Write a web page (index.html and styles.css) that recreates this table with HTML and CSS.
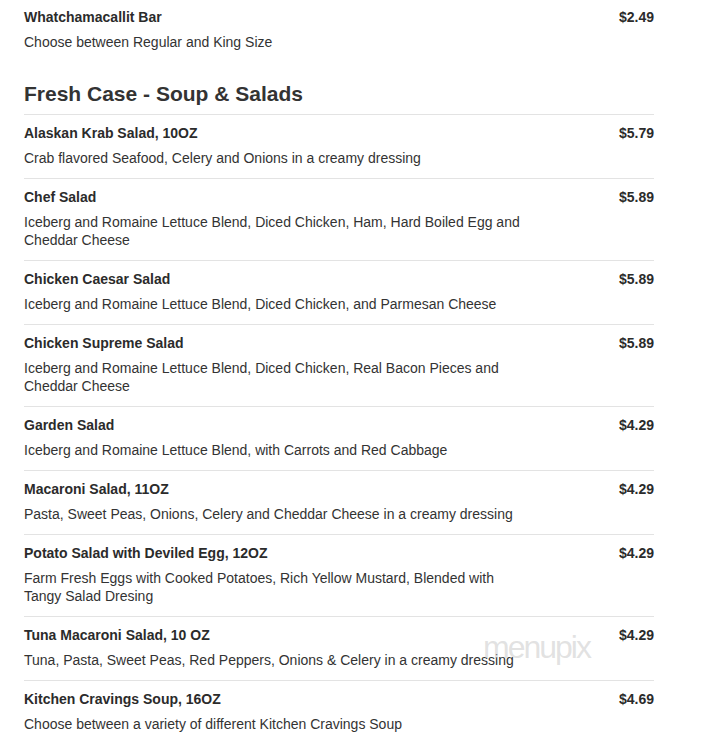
FILE: index.html
```html
<!DOCTYPE html>
<html lang="en">
<head>
<meta charset="utf-8">
<title>Menu</title>
<link rel="stylesheet" href="styles.css">
</head>
<body>
<div class="menu">
  <div class="section">
    <div class="item first">
      <div class="name">Whatchamacallit Bar</div>
      <div class="price">$2.49</div>
      <div class="desc">Choose between Regular and King Size</div>
    </div>
  </div>
  <div class="section">
    <h2 class="heading">Fresh Case - Soup &amp; Salads</h2>
    <div class="item">
      <div class="name">Alaskan Krab Salad, 10OZ</div>
      <div class="price">$5.79</div>
      <div class="desc">Crab flavored Seafood, Celery and Onions in a creamy dressing</div>
    </div>
    <div class="item">
      <div class="name">Chef Salad</div>
      <div class="price">$5.89</div>
      <div class="desc">Iceberg and Romaine Lettuce Blend, Diced Chicken, Ham, Hard Boiled Egg and Cheddar Cheese</div>
    </div>
    <div class="item">
      <div class="name">Chicken Caesar Salad</div>
      <div class="price">$5.89</div>
      <div class="desc">Iceberg and Romaine Lettuce Blend, Diced Chicken, and Parmesan Cheese</div>
    </div>
    <div class="item">
      <div class="name">Chicken Supreme Salad</div>
      <div class="price">$5.89</div>
      <div class="desc">Iceberg and Romaine Lettuce Blend, Diced Chicken, Real Bacon Pieces and Cheddar Cheese</div>
    </div>
    <div class="item">
      <div class="name">Garden Salad</div>
      <div class="price">$4.29</div>
      <div class="desc">Iceberg and Romaine Lettuce Blend, with Carrots and Red Cabbage</div>
    </div>
    <div class="item">
      <div class="name">Macaroni Salad, 11OZ</div>
      <div class="price">$4.29</div>
      <div class="desc">Pasta, Sweet Peas, Onions, Celery and Cheddar Cheese in a creamy dressing</div>
    </div>
    <div class="item">
      <div class="name">Potato Salad with Deviled Egg, 12OZ</div>
      <div class="price">$4.29</div>
      <div class="desc">Farm Fresh Eggs with Cooked Potatoes, Rich Yellow Mustard, Blended with Tangy Salad Dresing</div>
    </div>
    <div class="item">
      <div class="name">Tuna Macaroni Salad, 10 OZ</div>
      <div class="price">$4.29</div>
      <div class="desc">Tuna, Pasta, Sweet Peas, Red Peppers, Onions &amp; Celery in a creamy dressing</div>
      <div class="watermark">menupix</div>
    </div>
    <div class="item">
      <div class="name">Kitchen Cravings Soup, 16OZ</div>
      <div class="price">$4.69</div>
      <div class="desc">Choose between a variety of different Kitchen Cravings Soup</div>
    </div>
  </div>
</div>
</body>
</html>
```
FILE: styles.css
```css
html, body {
  margin: 0;
  padding: 0;
  background: #ffffff;
}

body {
  font-family: "Liberation Sans", Arial, sans-serif;
  color: #333333;
  font-size: 14px;
}

.menu {
  width: 630px;
  margin-left: 24px;
}

.heading {
  margin: 20px 0 8px 0;
  font-size: 21px;
  line-height: 24px;
  font-weight: bold;
  color: #333333;
}

.item {
  position: relative;
  display: grid;
  grid-template-columns: 1fr auto;
  padding: 8px 0 11px 0;
  border-top: 1px solid #e3e3e3;
}

.item.first {
  border-top: none;
  padding-top: 7px;
}

.name {
  grid-column: 1;
  grid-row: 1;
  font-weight: bold;
  line-height: 20px;
  margin-bottom: 6px;
  color: #2b2b2b;
}

.price {
  grid-column: 2;
  grid-row: 1;
  font-weight: bold;
  line-height: 20px;
  text-align: right;
  color: #2b2b2b;
}

.desc {
  grid-column: 1;
  grid-row: 2;
  max-width: 500px;
  line-height: 18px;
  color: #333333;
}

.watermark {
  position: absolute;
  left: 459px;
  top: 12px;
  font-family: "Liberation Sans", Arial, sans-serif;
  font-size: 32px;
  letter-spacing: -2px;
  color: rgba(190, 190, 190, 0.45);
  pointer-events: none;
}
```
